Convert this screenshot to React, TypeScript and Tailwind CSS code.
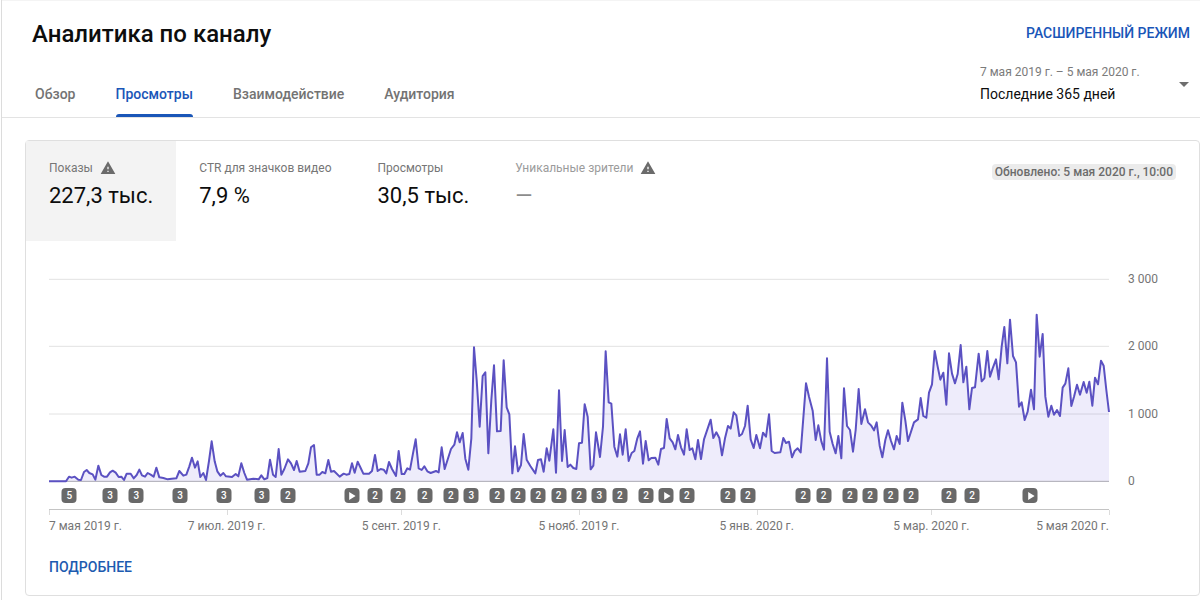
import { useState } from "react";
import { MdArrowDropDown, MdPlayArrow, MdWarning } from "react-icons/md";

interface Metric {
  id: string;
  label: string;
  value: string;
  warning?: boolean;
  empty?: boolean;
}

const tabs = ["Обзор", "Просмотры", "Взаимодействие", "Аудитория"];

const metrics: Metric[] = [
  { id: "impressions", label: "Показы", value: "227,3 тыс.", warning: true },
  { id: "ctr", label: "CTR для значков видео", value: "7,9 %" },
  { id: "views", label: "Просмотры", value: "30,5 тыс." },
  { id: "unique", label: "Уникальные зрители", value: "—", warning: true, empty: true },
];

const LAST_DAY = 364;

// [day, number of published videos], 1 is drawn as a play sign
const uploads: [number, number][] = [
  [7, 5], [21, 3], [30, 3], [45, 3], [60, 3], [73, 3], [82, 2], [104, 1],
  [112, 2], [120, 2], [129, 2], [138, 2], [145, 3], [154, 2], [161, 2],
  [168, 2], [175, 2], [182, 2], [189, 3], [196, 2], [205, 2], [212, 1],
  [219, 2], [233, 2], [240, 2], [259, 2], [266, 2], [275, 2], [282, 2],
  [289, 2], [296, 2], [309, 2], [317, 2], [337, 1],
];

const dates: [number, string][] = [
  [0, "7 мая 2019 г."],
  [61, "7 июл. 2019 г."],
  [121, "5 сент. 2019 г."],
  [182, "5 нояб. 2019 г."],
  [243, "5 янв. 2020 г."],
  [303, "5 мар. 2020 г."],
  [364, "5 мая 2020 г."],
];

const line = `0,610 51,610 60,596 68,599 77,596 88,605 96,606 105,582 113,576 121,585 131,589 139,605 148,563
157,591 165,596 174,596 183,583 191,578 200,584 209,597 217,596 225,606 233,587 245,587 254,601 263,591 271,575
279,592 288,596 296,585 305,590 314,596 322,569 331,598 343,600 356,604 368,602 382,601 391,579 403,593 412,590
421,565 429,539 438,569 446,550 454,597 463,585 471,606 480,549 488,490 497,550 505,580 514,593 523,585 531,595
549,597 560,588 568,595 577,556 586,585 594,605 613,602 629,604 637,592 646,604 655,600 663,545 672,590 680,597
689,513 697,590 706,573 717,544 726,556 735,576 743,549 752,581 769,579 778,556 786,508 795,501 803,590 812,590
820,582 829,586 838,546 846,581 855,579 872,596 884,587 892,590 901,588 909,556 917,584 926,551 935,570 943,587
960,587 969,579 978,531 986,579 995,573 1004,575 1012,586 1020,552 1029,573 1041,594 1049,519 1058,588 1066,588
1075,571 1083,575 1092,526 1100,484 1109,571 1118,576 1126,565 1135,580 1145,585 1161,579 1169,583 1178,508
1187,573 1206,513 1216,500 1224,463 1232,493 1241,465 1249,542 1258,575 1267,481 1275,208 1283,306 1292,446
1301,294 1309,283 1318,526 1327,366 1335,262 1344,460 1355,459 1364,247 1373,388 1381,409 1390,586 1398,505
1407,580 1416,561 1424,468 1433,545 1444,564 1459,586 1467,546 1476,544 1484,581 1493,511 1501,548 1513,454
1521,584 1530,337 1539,549 1547,456 1556,567 1564,560 1573,570 1582,573 1590,496 1599,494 1607,379 1616,416
1625,574 1633,563 1641,463 1653,537 1662,446 1670,220 1679,373 1687,377 1696,506 1705,536 1713,469 1721,530
1730,454 1739,549 1748,525 1756,519 1765,481 1773,460 1782,557 1790,489 1799,547 1807,540 1819,539 1828,560
1836,513 1845,510 1853,423 1862,481 1871,493 1879,514 1887,471 1896,508 1905,530 1913,454 1922,516 1930,511
1939,544 1947,486 1956,543 1965,484 1985,425 1993,480 2002,463 2011,480 2019,532 2028,481 2037,444 2045,452
2054,403 2062,412 2071,474 2079,468 2088,444 2096,383 2105,484 2114,510 2122,471 2133,511 2142,464 2151,476
2160,409 2168,519 2177,525 2194,523 2203,480 2211,495 2220,491 2229,538 2237,519 2246,511 2255,523 2271,316
2280,356 2291,398 2300,486 2308,442 2317,490 2325,515 2334,241 2342,461 2351,498 2360,526 2368,474 2377,541
2385,331 2394,444 2403,456 2412,521 2420,456 2429,333 2437,438 2448,394 2457,433 2466,442 2475,457 2483,433
2492,503 2500,538 2509,486 2517,457 2526,489 2535,514 2543,474 2552,498 2560,374 2569,428 2577,489 2595,433
2607,424 2615,360 2623,414 2632,419 2640,344 2649,319 2657,219 2666,266 2674,305 2683,284 2692,380 2700,226
2709,287 2718,316 2726,288 2735,201 2743,313 2752,266 2761,394 2769,330 2778,328 2789,227 2798,310 2806,301
2815,219 2823,296 2831,271 2841,244 2849,304 2858,206 2866,147 2875,256 2883,125 2892,234 2901,253 2910,386
2918,373 2927,426 2936,401 2946,335 2955,394 2963,110 2972,236 2981,168 2989,356 2998,416 3007,383 3015,410
3024,396 3033,414 3041,329 3049,317 3058,271 3067,384 3075,356 3084,320 3093,350 3104,312 3113,344 3121,311
3130,383 3138,299 3147,319 3156,248 3164,263 3172,336 3180,402`;

const dayLeft = (day: number) => ({ left: `${(day / LAST_DAY) * 100}%` });

const dateAlign = (day: number) => {
  if (day === 0) return "";
  if (day === LAST_DAY) return "-translate-x-full";
  return "-translate-x-1/2";
};

const Chart = () => (
  <svg
    className="block h-[204px] w-full overflow-visible"
    viewBox="0 0 3180 612"
    preserveAspectRatio="none"
    role="img"
    aria-label="График показов"
  >
    {[4, 205, 408].map((y) => (
      <line
        key={y}
        x1="0"
        x2="3180"
        y1={y}
        y2={y}
        stroke="#e2e2e2"
        vectorEffect="non-scaling-stroke"
      />
    ))}
    <polygon points={`${line} 3180,610 0,610`} fill="#6050dc" fillOpacity="0.11" />
    <line
      x1="0"
      x2="3180"
      y1="610"
      y2="610"
      stroke="#aaa9b3"
      vectorEffect="non-scaling-stroke"
    />
    <polyline
      points={line}
      fill="none"
      stroke="#5b51c2"
      strokeWidth="2"
      strokeLinejoin="round"
      vectorEffect="non-scaling-stroke"
    />
  </svg>
);

const App = () => {
  const [activeTab, setActiveTab] = useState("Просмотры");
  const [activeMetric, setActiveMetric] = useState("impressions");

  return (
    <div className="ml-px min-h-screen border-l border-[#dcdcdc] bg-white pb-[3px] font-[Roboto,sans-serif] text-[#0d0d0d]">
      <header className="flex justify-between border-b border-t border-b-[#e3e3e3] border-t-[#f4f4f4] pl-[30px]">
        <div className="flex flex-col justify-between pt-[17px]">
          <h1 className="text-2xl font-medium leading-8">Аналитика по каналу</h1>
          <div role="tablist" className="flex gap-10 pl-[3px]">
            {tabs.map((tab) => (
              <button
                key={tab}
                role="tab"
                aria-selected={tab === activeTab}
                onClick={() => setActiveTab(tab)}
                className={`flex h-12 flex-col justify-between pt-[15px] text-sm font-medium leading-5 ${
                  tab === activeTab ? "text-[#1a56b8]" : "text-[#737373]"
                }`}
              >
                {tab}
                {tab === activeTab && (
                  <span className="h-[3px] w-full rounded-t-sm bg-[#1a56b8]" />
                )}
              </button>
            ))}
          </div>
        </div>

        <div className="flex w-[220px] flex-col pb-[13px] pt-[22px]">
          <a
            href="#advanced"
            className="self-end pr-[10px] text-sm font-medium leading-5 text-[#1a56b8]"
          >
            РАСШИРЕННЫЙ РЕЖИМ
          </a>
          <label className="mt-[21px] flex items-center justify-between pr-1">
            <span className="flex flex-col">
              <span className="text-xs leading-4 text-[#7b7b7b]">
                7 мая 2019 г. – 5 мая 2020 г.
              </span>
              <select className="mt-1 h-5 w-[180px] appearance-none bg-transparent text-sm leading-5">
                <option>Последние 365 дней</option>
                <option>Последние 90 дней</option>
                <option>Последние 28 дней</option>
              </select>
            </span>
            <MdArrowDropDown className="size-6 text-[#6e6e6e]" />
          </label>
        </div>
      </header>

      <section className="ml-[23px] mt-[22px] rounded border border-[#dfdfdf]">
        <div className="flex items-start justify-between">
          <div className="flex">
            {metrics.map((metric) => (
              <button
                key={metric.id}
                onClick={() => setActiveMetric(metric.id)}
                className={`flex h-[100px] flex-col items-start px-[23px] pt-[19px] text-left ${
                  metric.id === activeMetric ? "bg-[#f3f3f3]" : ""
                }`}
              >
                <span
                  className={`flex items-center gap-[7px] text-xs leading-4 ${
                    metric.empty ? "text-[#9b9b9b]" : "text-[#767676]"
                  }`}
                >
                  {metric.label}
                  {metric.warning && <MdWarning className="size-4 text-[#6b6b6b]" />}
                </span>
                <span
                  className={`mt-1 text-[22px] leading-8 ${
                    metric.empty ? "text-[#8c8c8c]" : ""
                  }`}
                >
                  {metric.value}
                </span>
              </button>
            ))}
          </div>
          <p className="mr-[23px] mt-[23px] rounded-sm bg-[#ebebeb] px-[3px] text-xs font-medium leading-4 text-[#6b6b6b]">
            Обновлено: 5 мая 2020 г., 10:00
          </p>
        </div>

        <div className="flex pl-[23px] pt-[37px]">
          <div className="min-w-0 flex-1">
            <Chart />
            <div className="relative mt-1.5 h-[22px] border-b border-[#c4c4c4]">
              {uploads.map(([day, count]) => (
                <span
                  key={day}
                  style={dayLeft(day)}
                  className="absolute top-0 flex size-[15px] -translate-x-1/2 items-center justify-center rounded-sm bg-[#696969] text-[10px] font-medium leading-none text-white"
                >
                  {count === 1 ? <MdPlayArrow className="size-[14px]" /> : count}
                </span>
              ))}
            </div>
            <div className="relative h-[23px] text-xs leading-4 text-[#757575]">
              {dates.map(([day, label]) => (
                <div key={day} style={dayLeft(day)} className="absolute top-0">
                  <div className="h-[5px] w-px bg-[#dcdcdc]" />
                  <div className={`mt-[3px] w-max ${dateAlign(day)}`}>{label}</div>
                </div>
              ))}
            </div>
          </div>
          <div className="-mt-[7px] flex h-[218px] w-[90px] flex-col justify-between pl-[19px] text-xs leading-4 text-[#757575]">
            <span>3 000</span>
            <span>2 000</span>
            <span>1 000</span>
            <span>0</span>
          </div>
        </div>

        <a
          href="#details"
          className="mb-[18px] ml-[23px] mt-6 inline-block text-sm font-medium leading-5 text-[#1d5bb0]"
        >
          ПОДРОБНЕЕ
        </a>
      </section>
    </div>
  );
};

export default App;
